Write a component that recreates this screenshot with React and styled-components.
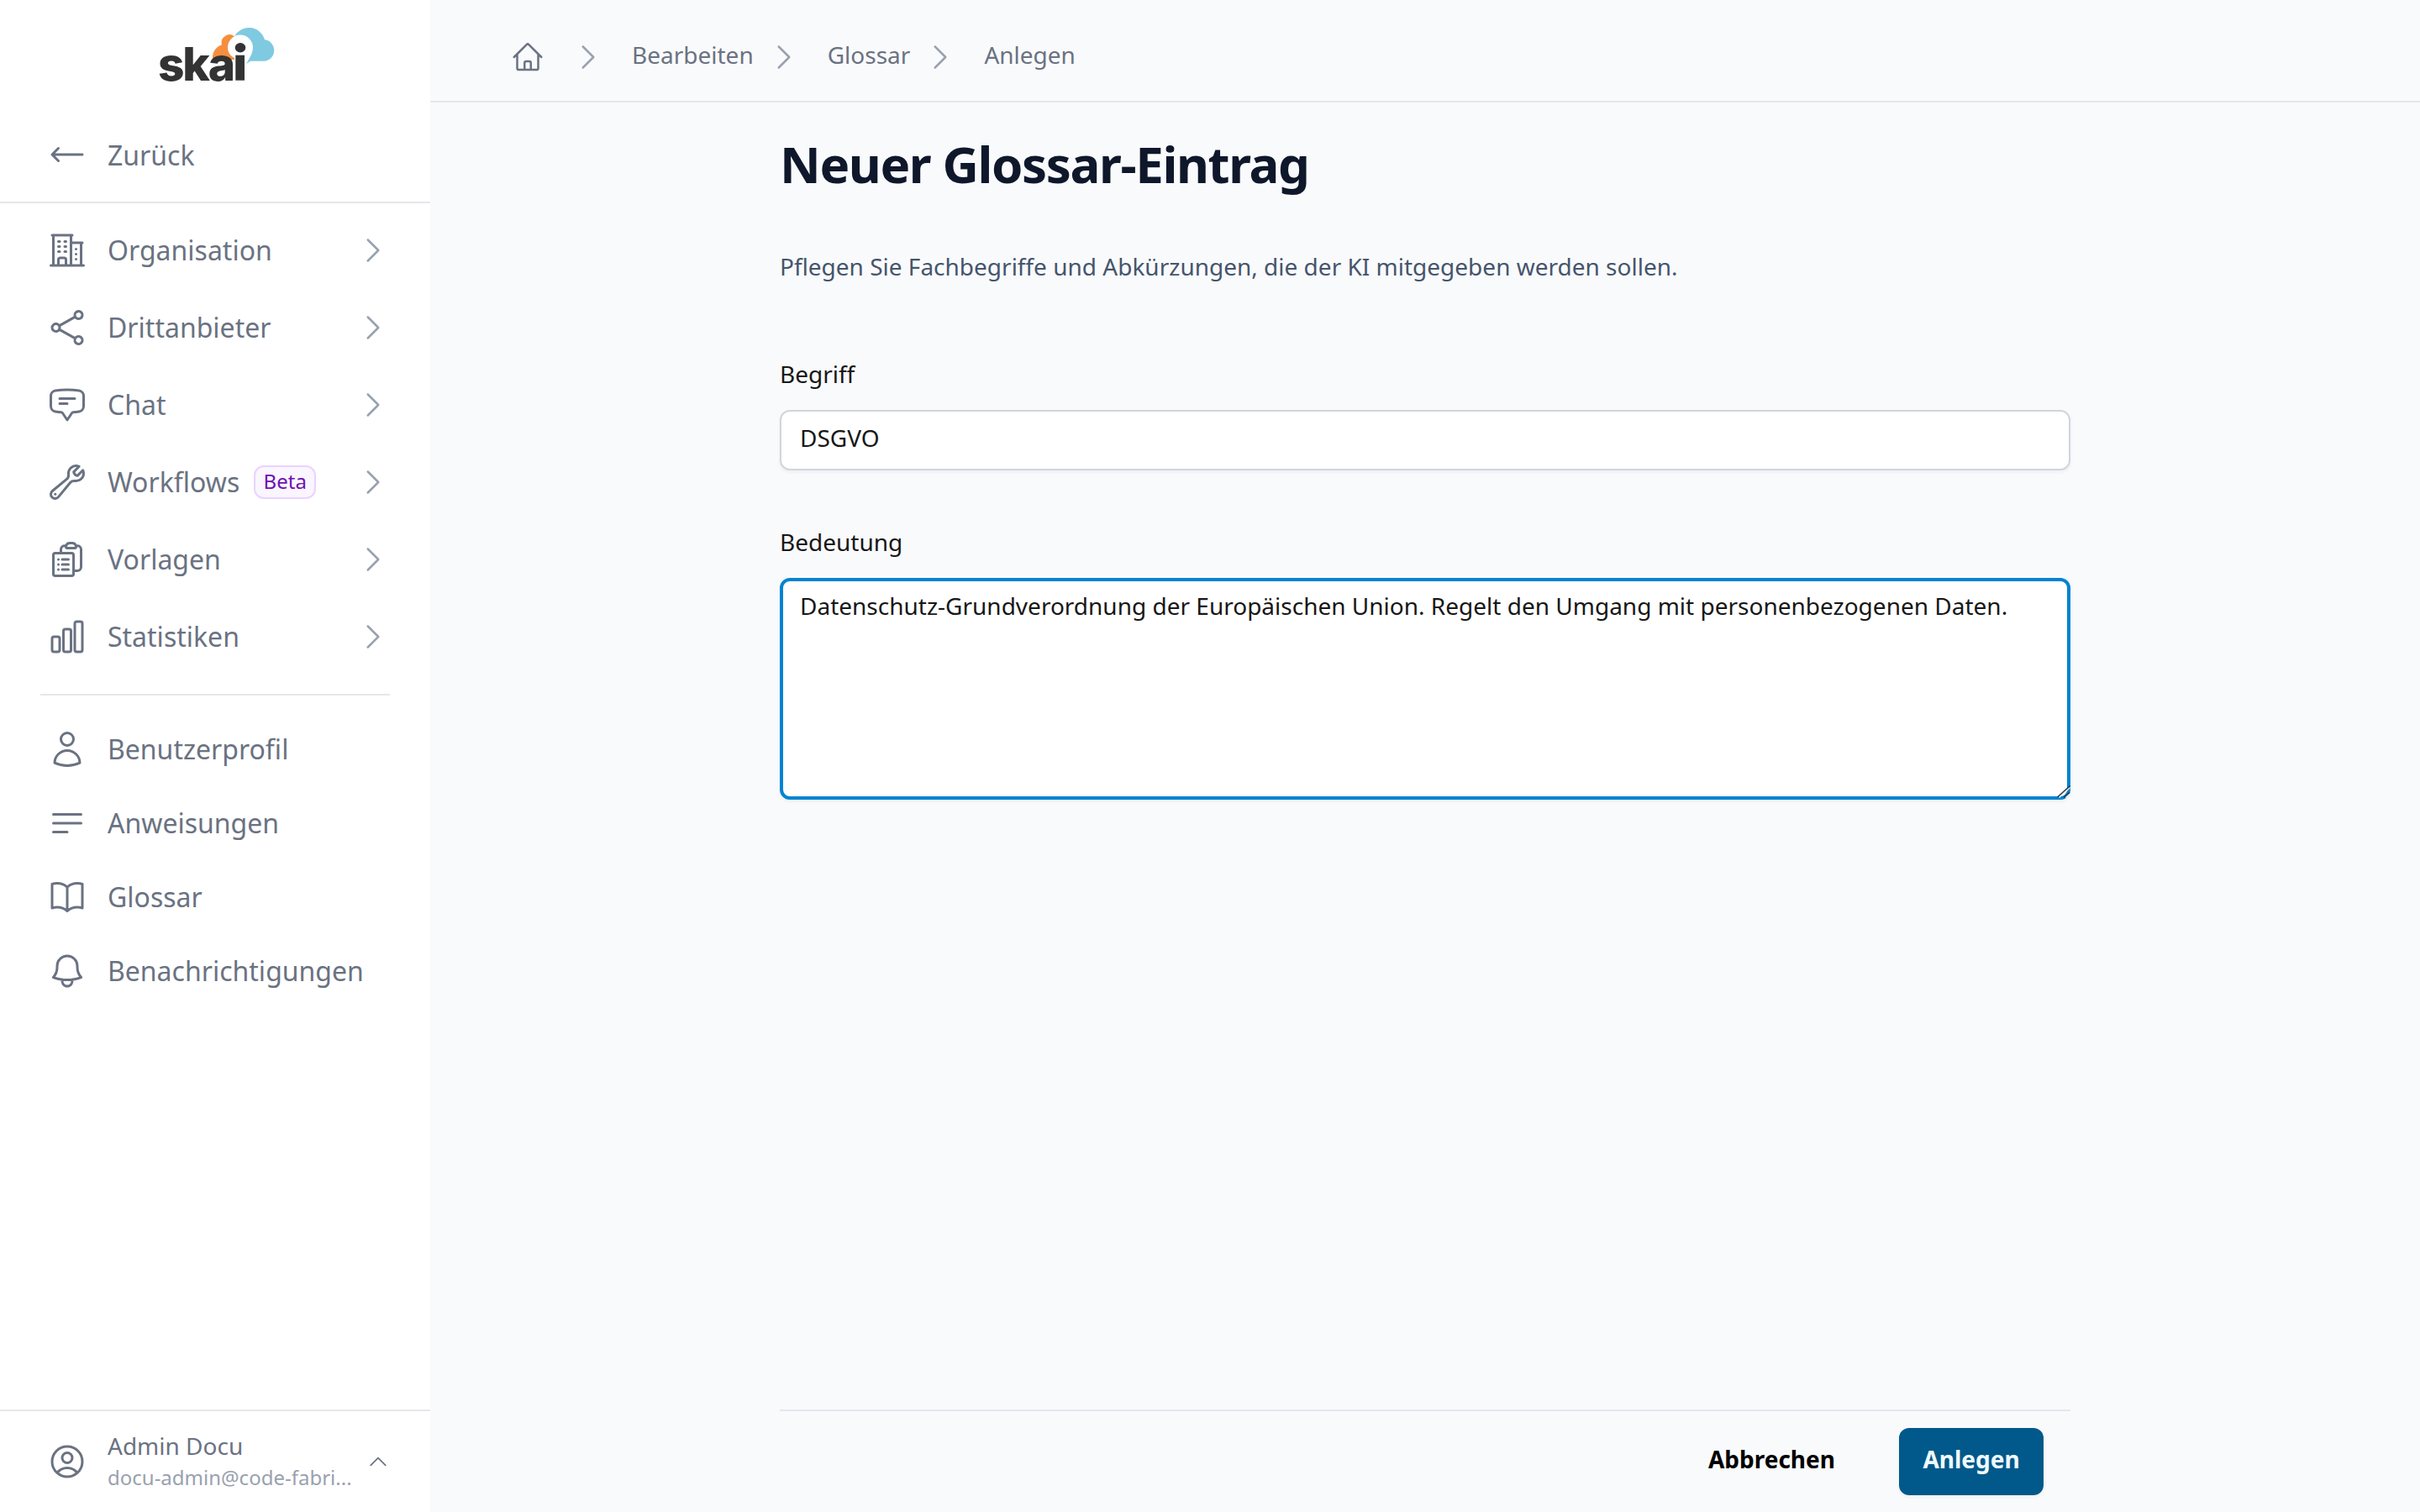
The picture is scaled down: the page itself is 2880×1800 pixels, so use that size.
import React, { useState } from 'react';
import styled, { createGlobalStyle } from 'styled-components';
import {
  HiOutlineArrowLongLeft,
  HiOutlineBars3BottomLeft,
  HiOutlineBell,
  HiOutlineBookOpen,
  HiOutlineBuildingOffice2,
  HiOutlineChartBar,
  HiOutlineChatBubbleBottomCenterText,
  HiOutlineChevronRight,
  HiOutlineChevronUp,
  HiOutlineClipboardDocumentList,
  HiOutlineHome,
  HiOutlineShare,
  HiOutlineUser,
  HiOutlineUserCircle,
  HiOutlineWrench,
} from 'react-icons/hi2';

const adminLinks = [
  { label: 'Organisation', icon: HiOutlineBuildingOffice2 },
  { label: 'Drittanbieter', icon: HiOutlineShare },
  { label: 'Chat', icon: HiOutlineChatBubbleBottomCenterText },
  { label: 'Workflows', icon: HiOutlineWrench, badge: 'Beta' },
  { label: 'Vorlagen', icon: HiOutlineClipboardDocumentList },
  { label: 'Statistiken', icon: HiOutlineChartBar },
];

const userLinks = [
  { label: 'Benutzerprofil', icon: HiOutlineUser },
  { label: 'Anweisungen', icon: HiOutlineBars3BottomLeft },
  { label: 'Glossar', icon: HiOutlineBookOpen },
  { label: 'Benachrichtigungen', icon: HiOutlineBell },
];

const crumbs = ['Bearbeiten', 'Glossar', 'Anlegen'];

function Logo() {
  return (
    <LogoSvg viewBox="0 0 140 66">
      <path
        fill="#f68e3f"
        d="M64 36A15.500 15.500 0 0 1 75 22.300A9.500 9.500 0 0 1 90 12.300L97 25V40H64z"
      />
      <path
        fill="#7fcae0"
        d="M90 12.300A19.500 19.500 0 0 1 126 16.300A12.800 12.800 0 0 1 126 41.700H109L104.300 45L97 25z"
      />
      <path
        fill="#fff"
        d="M97 10.500A15 15 0 0 1 112 25.500C112 33 107 39 104.300 45L102 48H90V38C86 36 82 32 82 25.500A15 15 0 0 1 97 10.500z"
      />
      <Letters x="-1" y="64.700" textLength="92">
        ska
      </Letters>
      <rect x="91.300" y="34.700" width="10.700" height="30" fill="#333" />
      <ellipse cx="97" cy="25.700" rx="6.300" ry="5.700" fill="#333" />
    </LogoSvg>
  );
}

function NavLink({ item, tall }) {
  const Icon = item.icon;
  return (
    <Row $tall={tall}>
      <Icon size={48} />
      <RowLabel>{item.label}</RowLabel>
      {item.badge ? <Badge>{item.badge}</Badge> : ''}
      {tall ? (
        <RowArrow>
          <HiOutlineChevronRight size={40} />
        </RowArrow>
      ) : (
        ''
      )}
    </Row>
  );
}

function Sidebar() {
  return (
    <Side>
      <LogoBox>
        <Logo />
      </LogoBox>
      <Back>
        <HiOutlineArrowLongLeft size={48} />
        Zurück
      </Back>
      <AdminNav>
        {adminLinks.map(item => (
          <NavLink key={item.label} item={item} tall />
        ))}
      </AdminNav>
      <UserNav>
        {userLinks.map(item => (
          <NavLink key={item.label} item={item} />
        ))}
      </UserNav>
      <Account>
        <HiOutlineUserCircle size={48} />
        <AccountText>
          <AccountName>Admin Docu</AccountName>
          <AccountMail>docu-admin@code-fabri...</AccountMail>
        </AccountText>
        <HiOutlineChevronUp size={28} />
      </Account>
    </Side>
  );
}

function Breadcrumbs() {
  return (
    <TopBar>
      <HiOutlineHome size={40} />
      {crumbs.map(crumb => (
        <Crumb key={crumb}>
          <HiOutlineChevronRight size={40} />
          <CrumbLabel>{crumb}</CrumbLabel>
        </Crumb>
      ))}
    </TopBar>
  );
}

export default function App() {
  const [term, setTerm] = useState('DSGVO');
  const [meaning, setMeaning] = useState(
    'Datenschutz-Grundverordnung der Europäischen Union. Regelt den Umgang mit personenbezogenen Daten.'
  );

  return (
    <Page>
      <GlobalStyle />
      <Sidebar />
      <Main>
        <Breadcrumbs />
        <Content>
          <Title>Neuer Glossar-Eintrag</Title>
          <Intro>
            Pflegen Sie Fachbegriffe und Abkürzungen, die der KI mitgegeben
            werden sollen.
          </Intro>
          <Label htmlFor="term">Begriff</Label>
          <Input
            id="term"
            value={term}
            onChange={evt => setTerm(evt.target.value)}
          />
          <Label htmlFor="meaning">Bedeutung</Label>
          <AreaBox>
            <Area
              id="meaning"
              spellCheck={false}
              value={meaning}
              onChange={evt => setMeaning(evt.target.value)}
            />
            <Grip viewBox="0 0 16 16">
              <path stroke="#e8f2fa" d="M2.500 15.500L15.500 3.500M10.500 15.500L15.500 11" />
              <path stroke="#333" d="M0.500 15L15.500 1.500M8 15.300L15 9.300" />
            </Grip>
          </AreaBox>
          <Actions>
            <Cancel>Abbrechen</Cancel>
            <Submit>Anlegen</Submit>
          </Actions>
        </Content>
      </Main>
    </Page>
  );
}

const GlobalStyle = createGlobalStyle`
  * {
    box-sizing: border-box;
  }
  body {
    margin: 0;
    font-family: 'Noto Sans', sans-serif;
    background: #f9fafc;
  }
  svg {
    flex-shrink: 0;
  }
`;
const Page = styled.div`
  display: flex;
  height: 1800px;
  overflow: hidden;
`;
const Side = styled.aside`
  display: flex;
  flex-direction: column;
  width: 512px;
  flex-shrink: 0;
  background: #fff;
  color: #6a7282;
  font-size: 32px;
`;
const LogoBox = styled.div`
  display: flex;
  height: 128px;
  padding: 31px 0 0 189px;
`;
const LogoSvg = styled.svg`
  width: 140px;
  height: 66px;
  overflow: visible;
`;
const Letters = styled.text`
  font-family: Inter, sans-serif;
  font-size: 55px;
  font-weight: 800;
  fill: #333;
`;
const Back = styled.a`
  display: flex;
  align-items: center;
  gap: 24px;
  height: 114px;
  padding: 0 56px;
  border-bottom: 2px solid #e5e7eb;
`;
const AdminNav = styled.nav`
  padding: 10px 48px 22px 56px;
`;
const UserNav = styled.nav`
  margin: 0 48px;
  padding: 20px 8px 0;
  border-top: 2px solid #e5e7eb;
`;
const Row = styled.a`
  display: flex;
  align-items: center;
  height: ${props => (props.$tall ? '92px' : '88px')};
`;
const RowLabel = styled.span`
  margin-left: 24px;
  padding-bottom: 2px;
`;
const Badge = styled.span`
  width: 74px;
  height: 40px;
  margin-left: 17px;
  border: 2px solid #e9d4ff;
  border-radius: 12px;
  background: #faf5ff;
  color: #6e11b0;
  font-size: 24px;
  line-height: 34px;
  text-align: center;
`;
const RowArrow = styled.span`
  display: flex;
  margin-left: auto;
  color: #99a1af;
`;
const Account = styled.div`
  display: flex;
  align-items: center;
  height: 122px;
  margin-top: auto;
  padding: 0 48px 0 56px;
  border-top: 2px solid #e5e7eb;
`;
const AccountText = styled.div`
  flex: 1;
  min-width: 0;
  margin-left: 24px;
  padding-bottom: 5px;
  white-space: nowrap;
`;
const AccountName = styled.div`
  font-size: 28px;
  line-height: 40px;
`;
const AccountMail = styled.div`
  padding-top: 2px;
  color: #99a1af;
  font-size: 24px;
  line-height: 32px;
`;
const Main = styled.main`
  display: flex;
  flex: 1;
  flex-direction: column;
  align-items: center;
`;
const TopBar = styled.header`
  display: flex;
  align-items: center;
  align-self: stretch;
  height: 122px;
  padding: 16px 96px 0;
  border-bottom: 2px solid #e5e7eb;
  color: #6a7282;
  font-size: 28px;
`;
const Crumb = styled.span`
  display: flex;
  align-items: center;
  svg {
    margin: 0 32px 0 16px;
    color: #99a1af;
  }
  &:nth-child(2) svg {
    margin-left: 32px;
  }
`;
const CrumbLabel = styled.span`
  margin-top: -6px;
`;
const Content = styled.section`
  display: flex;
  flex: 1;
  flex-direction: column;
  width: 1536px;
`;
const Title = styled.h1`
  margin: 37px 0 0;
  color: #0f172b;
  font-size: 60px;
  font-weight: 700;
  line-height: 72px;
  letter-spacing: -1.4px;
`;
const Intro = styled.p`
  margin: 66px 0 0;
  color: #45556c;
  font-size: 28px;
  line-height: 40px;
`;
const Label = styled.label`
  margin: 88px 0 0;
  color: #171717;
  font-size: 28px;
  line-height: 40px;
`;
const Input = styled.input`
  height: 72px;
  margin: 23px 0 -23px;
  padding: 0 22px 6px;
  border: 2px solid #d1d5dc;
  border-radius: 12px;
  outline: none;
  background: #fff;
  box-shadow: 0 2px 4px rgba(0, 0, 0, 0.05);
  color: #171717;
  font: 28px 'Noto Sans', sans-serif;
`;
const AreaBox = styled.div`
  position: relative;
  height: 264px;
  margin-top: 23px;
`;
const Area = styled.textarea`
  display: block;
  width: 100%;
  height: 264px;
  padding: 9px 20px;
  border: 4px solid #0084d1;
  border-radius: 12px;
  outline: none;
  resize: none;
  background: #fff;
  box-shadow: 0 2px 4px rgba(0, 0, 0, 0.05);
  color: #171717;
  font: 28px/40px 'Noto Sans', sans-serif;
`;
/* resize handle, sits across the rounded corner of the field */
const Grip = styled.svg`
  position: absolute;
  right: 0;
  bottom: 2px;
  width: 16px;
  height: 16px;
  fill: none;
  stroke-width: 1.5;
`;
const Actions = styled.footer`
  display: flex;
  align-items: center;
  justify-content: flex-end;
  gap: 76px;
  height: 122px;
  margin-top: auto;
  padding: 0 32px 0 0;
  border-top: 2px solid #e2e8f0;
`;
const Cancel = styled.button`
  padding: 0 0 6px;
  border: none;
  background: none;
  color: #000;
  font: 700 28px/40px 'Noto Sans', sans-serif;
`;
const Submit = styled.button`
  width: 172px;
  height: 80px;
  padding: 0 0 6px;
  border: none;
  border-radius: 12px;
  background: #00598a;
  box-shadow: 0 2px 4px rgba(0, 0, 0, 0.05);
  color: #f0f9ff;
  font: 700 28px/40px 'Noto Sans', sans-serif;
`;
